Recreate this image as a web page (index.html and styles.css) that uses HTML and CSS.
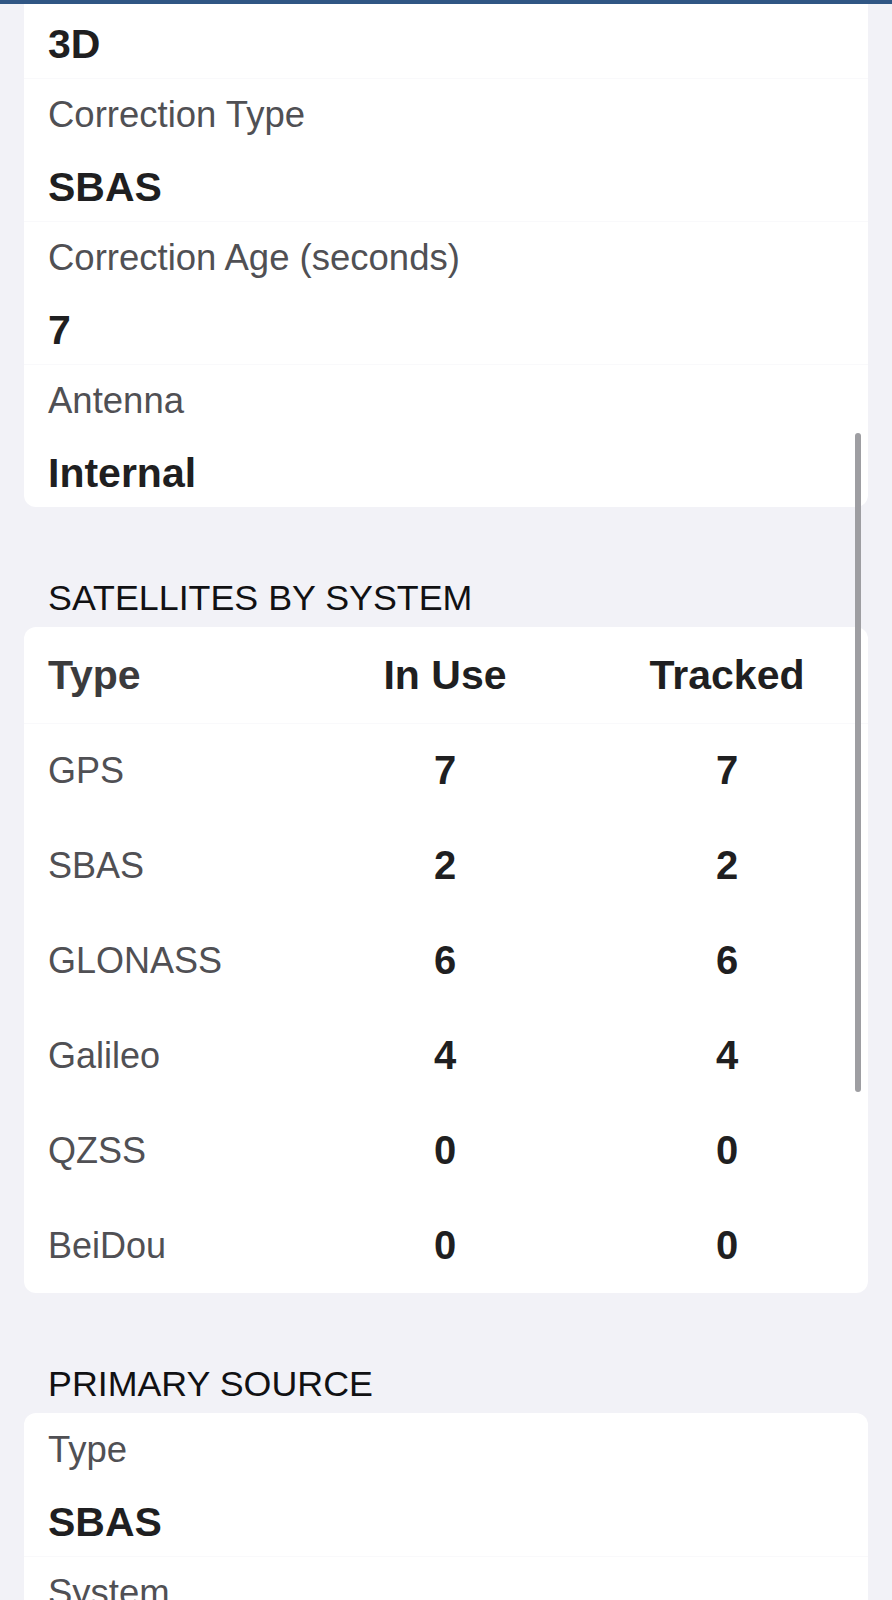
FILE: index.html
```html
<!DOCTYPE html>
<html lang="en">
<head>
<meta charset="utf-8">
<title>GNSS Status</title>
<link rel="stylesheet" href="styles.css">
</head>
<body>
<div class="topbar"></div>
<div class="scrollbar"></div>
<main class="screen">
  <section class="card card-top">
    <div class="group group-partial">
      <div class="value">3D</div>
    </div>
    <div class="group">
      <div class="label">Correction Type</div>
      <div class="value">SBAS</div>
    </div>
    <div class="group">
      <div class="label">Correction Age (seconds)</div>
      <div class="value">7</div>
    </div>
    <div class="group">
      <div class="label">Antenna</div>
      <div class="value">Internal</div>
    </div>
  </section>

  <h2 class="section-title">SATELLITES BY SYSTEM</h2>
  <section class="card table">
    <div class="row head">
      <div class="c1 type-head">Type</div>
      <div class="c2">In Use</div>
      <div class="c3">Tracked</div>
    </div>
    <div class="row">
      <div class="c1 sys">GPS</div>
      <div class="c2 num">7</div>
      <div class="c3 num">7</div>
    </div>
    <div class="row">
      <div class="c1 sys">SBAS</div>
      <div class="c2 num">2</div>
      <div class="c3 num">2</div>
    </div>
    <div class="row">
      <div class="c1 sys">GLONASS</div>
      <div class="c2 num">6</div>
      <div class="c3 num">6</div>
    </div>
    <div class="row">
      <div class="c1 sys">Galileo</div>
      <div class="c2 num">4</div>
      <div class="c3 num">4</div>
    </div>
    <div class="row">
      <div class="c1 sys">QZSS</div>
      <div class="c2 num">0</div>
      <div class="c3 num">0</div>
    </div>
    <div class="row">
      <div class="c1 sys">BeiDou</div>
      <div class="c2 num">0</div>
      <div class="c3 num">0</div>
    </div>
  </section>

  <h2 class="section-title">PRIMARY SOURCE</h2>
  <section class="card">
    <div class="group">
      <div class="label">Type</div>
      <div class="value">SBAS</div>
    </div>
    <div class="group">
      <div class="label">System</div>
    </div>
  </section>
</main>
</body>
</html>
```

FILE: styles.css
```css
html, body {
  margin: 0;
  padding: 0;
  background: #f2f2f7;
  font-family: "Liberation Sans", Arial, Helvetica, sans-serif;
  color: #1c1c1e;
}

.topbar {
  position: fixed;
  top: 0;
  left: 0;
  right: 0;
  height: 4px;
  background: #305684;
  z-index: 10;
}

.scrollbar {
  position: fixed;
  top: 433px;
  right: 31px;
  width: 6px;
  height: 659px;
  border-radius: 3px;
  background: #9e9ea2;
  z-index: 10;
}

.screen {
  padding: 0 24px 40px;
}

.card {
  background: #ffffff;
  border-radius: 12px;
}

/* page is scrolled: the top of the first card lies above the viewport */
.card-top {
  border-top-left-radius: 0;
  border-top-right-radius: 0;
}

.group {
  display: flex;
  flex-direction: column;
  gap: 22px;
  padding: 12px 24px 9px;
}

.group-partial {
  padding-top: 19px;
}

.group + .group {
  box-shadow: inset 0 1px 0 #f9f9fb;
}

.label {
  font-size: 36.5px;
  line-height: 50px;
  color: #505054;
}

.value {
  font-size: 41px;
  line-height: 50px;
  font-weight: bold;
  color: #1f1f21;
}

.section-title {
  margin: 71px 24px 9px;
  font-size: 35.8px;
  line-height: 40px;
  font-weight: normal;
  color: #111113;
}

.table {
  padding-top: 1px;
}

.row {
  display: grid;
  grid-template-columns: 232px 330px 234px;
  align-items: center;
  height: 95px;
  padding: 0 24px;
}

.head + .row {
  box-shadow: inset 0 1px 0 #f9f9fb;
}

.c2, .c3 {
  text-align: center;
}

.head div {
  font-size: 41px;
  font-weight: bold;
  color: #1f1f21;
}

.head .type-head {
  color: #3b3b3d;
}

.sys {
  font-size: 36px;
  color: #505054;
}

.num {
  font-size: 40px;
  font-weight: bold;
  color: #1f1f21;
}
```
